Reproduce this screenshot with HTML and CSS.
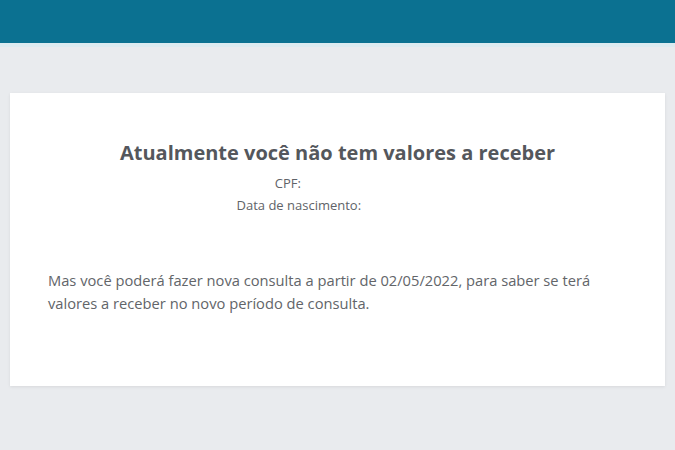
FILE: index.html
```html
<!DOCTYPE html>
<html lang="pt-BR">
<head>
<meta charset="utf-8">
<title>Valores a receber</title>
<link rel="stylesheet" href="styles.css">
</head>
<body>
<header class="topbar"></header>
<main class="page">
  <section class="card">
    <h1 class="title">Atualmente você não tem valores a receber</h1>
    <div class="info">
      <div class="info-line">CPF: <span class="redacted redacted-cpf"></span></div>
      <div class="info-line">Data de nascimento: <span class="redacted redacted-date"></span></div>
    </div>
    <p class="message">Mas você poderá fazer nova consulta a partir de 02/05/2022, para saber se terá valores a receber no novo período de consulta.</p>
  </section>
</main>
</body>
</html>
```
FILE: styles.css
```css
html, body {
  margin: 0;
  padding: 0;
}
body {
  background: #e9ebee;
  font-family: "Open Sans", Lato, sans-serif;
  color: #5a5d62;
  width: 675px;
  height: 450px;
  overflow: hidden;
}
.topbar {
  height: 43px;
  background: #0b7191;
  border-bottom: 4px solid #dcebf0;
}
.page {
  padding: 46px 10px 0 10px;
}
.card {
  background: #ffffff;
  height: 293px;
  box-sizing: border-box;
  padding: 46px 38px 0 38px;
  box-shadow: 0 1px 3px rgba(0, 0, 0, 0.08);
}
.title {
  margin: 0;
  text-align: center;
  font-size: 20px;
  font-weight: 700;
  line-height: 28px;
  color: #54575c;
}
.info {
  text-align: center;
  margin-top: 5px;
  font-size: 13px;
  line-height: 22px;
  color: #606368;
}
.redacted {
  display: inline-block;
  height: 1px;
}
.redacted-cpf {
  width: 96px;
}
.redacted-date {
  width: 74px;
}
.message {
  margin: 53px 0 0 0;
  font-size: 14.7px;
  line-height: 23px;
  color: #626569;
}
```
